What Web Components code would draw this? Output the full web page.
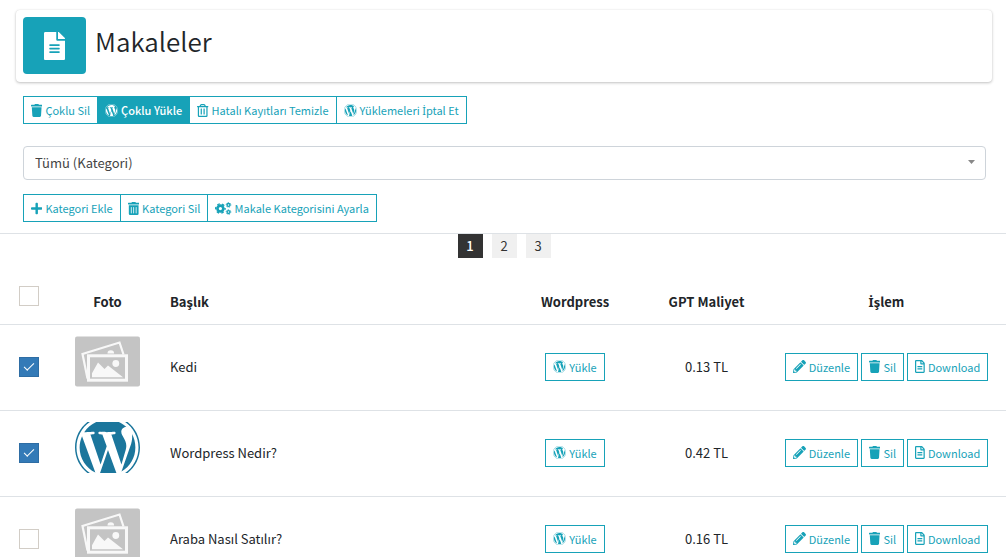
<!DOCTYPE html>
<html lang="tr">
<head>
<meta charset="utf-8">
<meta name="viewport" content="width=device-width, initial-scale=1">
<title>Makaleler</title>
<style>
  :root {
    --info: #17a2b8;
    --line: #dee2e6;
    --text: #212529;
  }

  body {
    margin: 0;
    background: #ffffff;
    color: var(--text);
    font-family: "Noto Sans CJK JP", "Noto Sans", sans-serif;
    font-size: 14px;
    line-height: 20px;
  }
</style>
</head>
<body>
<article-page></article-page>

<script>
const TRASH_LID = "M432 32H312l-9.4-18.7A24 24 0 0 0 281.1 0H166.8a23.72 23.72 0 0 0-21.4 13.3L136 32H16A16 16 0 0 0 0 48v32a16 16 0 0 0 16 16h416a16 16 0 0 0 16-16V48a16 16 0 0 0-16-16z"

const ICONS = {
  trash: { box: "0 0 448 512", body: `<path d="${TRASH_LID}M53.2 467a48 48 0 0 0 47.9 45h245.8a48 48 0 0 0 47.9-45L416 128H32z"/>` },
  bin: { box: "0 0 448 512", body: `<path d="${TRASH_LID}M32 464a48 48 0 0 0 48 48h288a48 48 0 0 0 48-48V128H32zm272-256a16 16 0 0 1 32 0v224a16 16 0 0 1-32 0zm-96 0a16 16 0 0 1 32 0v224a16 16 0 0 1-32 0zm-96 0a16 16 0 0 1 32 0v224a16 16 0 0 1-32 0z"/>` },
  binOutline: { box: "0 0 448 512", body: `<path d="M268 416h24a12 12 0 0 0 12-12V188a12 12 0 0 0-12-12h-24a12 12 0 0 0-12 12v216a12 12 0 0 0 12 12zM432 80h-82.41l-34-56.7A48 48 0 0 0 274.41 0H173.59a48 48 0 0 0-41.16 23.3L98.41 80H16A16 16 0 0 0 0 96v16a16 16 0 0 0 16 16h16v336a48 48 0 0 0 48 48h288a48 48 0 0 0 48-48V128h16a16 16 0 0 0 16-16V96a16 16 0 0 0-16-16zM171.84 50.91A6 6 0 0 1 177 48h94a6 6 0 0 1 5.15 2.91L293.61 80H154.39zM368 464H80V128h288zm-212-48h24a12 12 0 0 0 12-12V188a12 12 0 0 0-12-12h-24a12 12 0 0 0-12 12v216a12 12 0 0 0 12 12z"/>` },
  wordpress: { box: "8 8 496 496", body: `<path d="M61.7 169.4l101.5 278C92.2 413 43.3 340.2 43.3 256c0-30.9 6.6-60.1 18.4-86.6zm337.9 75.9c0-26.3-9.4-44.5-17.5-58.7-10.8-17.5-20.9-32.4-20.9-49.9 0-19.6 14.8-37.8 35.7-37.8.9 0 1.8.1 2.8.2-37.9-34.7-88.3-55.9-143.7-55.9-74.3 0-139.7 38.1-177.8 95.9 5 .2 9.7.3 13.7.3 22.2 0 56.7-2.7 56.7-2.7 11.5-.7 12.8 16.2 1.4 17.5 0 0-11.5 1.3-24.3 2l77.5 230.4L249.8 247l-33.1-90.8c-11.5-.7-22.3-2-22.3-2-11.5-.7-10.1-18.2 1.3-17.5 0 0 35.1 2.7 56 2.7 22.2 0 56.7-2.7 56.7-2.7 11.5-.7 12.8 16.2 1.4 17.5 0 0-11.5 1.3-24.3 2l76.9 228.7 21.2-70.9c9-29.4 16-50.5 16-68.7zm-139.9 29.3l-63.8 185.5c19.1 5.6 39.2 8.7 60.1 8.7 24.8 0 48.5-4.3 70.6-12.1-.6-.9-1.1-1.9-1.5-2.9l-65.4-179.2zm183-120.7c.9 6.8 1.4 14 1.4 21.9 0 21.6-4 45.8-16.2 76.2l-65 187.9C426.2 403 468.7 334.5 468.7 256c0-37-9.4-71.8-26-102.1zM504 256c0 136.8-111.3 248-248 248C119.2 504 8 392.7 8 256 8 119.2 119.2 8 256 8c136.7 0 248 111.2 248 248zm-11.4 0c0-130.5-106.2-236.6-236.6-236.6C125.5 19.4 19.4 125.6 19.4 256S125.6 492.6 256 492.6c130.5 0 236.6-106.1 236.6-236.6z"/>` },
  plus: { box: "0 0 448 512", body: `<path d="M416 208H272V64c0-17.67-14.33-32-32-32h-32c-17.67 0-32 14.33-32 32v144H32c-17.67 0-32 14.33-32 32v32c0 17.67 14.33 32 32 32h144v144c0 17.67 14.33 32 32 32h32c17.67 0 32-14.33 32-32V304h144c17.67 0 32-14.33 32-32v-32c0-17.67-14.33-32-32-32z"/>` },
  cogs: { box: "0 0 640 512", body: `
    <g fill="none" stroke="currentColor">
      <circle cx="212" cy="256" r="116" stroke-width="104"/>
      <circle cx="212" cy="256" r="184" stroke-width="56" stroke-dasharray="100 92.7" stroke-dashoffset="50"/>
      <circle cx="532" cy="116" r="58" stroke-width="54"/>
      <circle cx="532" cy="116" r="92" stroke-width="30" stroke-dasharray="52 44.3" stroke-dashoffset="26"/>
      <circle cx="532" cy="396" r="58" stroke-width="54"/>
      <circle cx="532" cy="396" r="92" stroke-width="30" stroke-dasharray="52 44.3" stroke-dashoffset="26"/>
    </g>` },
  pencil: { box: "0 0 512 512", body: `<path d="M497.9 142.1l-46.1 46.1c-4.7 4.7-12.3 4.7-17 0l-111-111c-4.7-4.7-4.7-12.3 0-17l46.1-46.1c18.7-18.7 49.1-18.7 67.9 0l60.1 60.1c18.8 18.7 18.8 49.1 0 67.9zM284.2 99.8L21.6 362.4.4 483.9c-2.9 16.4 11.4 30.6 27.8 27.8l121.5-21.3 262.6-262.6c4.7-4.7 4.7-12.3 0-17l-111-111c-4.8-4.7-12.4-4.7-17.1 0zM124.1 339.9c-5.5-5.5-5.5-14.3 0-19.8l154-154c5.5-5.5 14.3-5.5 19.8 0s5.5 14.3 0 19.8l-154 154c-5.5 5.5-14.3 5.5-19.8 0zM88 424h48v36.3l-64.5 11.3-31.1-31.1L51.7 376H88v48z"/>` },
  file: { box: "0 0 384 512", body: `<path d="M224 136V0H24C10.7 0 0 10.7 0 24v464c0 13.3 10.7 24 24 24h336c13.3 0 24-10.7 24-24V160H248c-13.2 0-24-10.8-24-24zm64 236c0 6.6-5.4 12-12 12H108c-6.6 0-12-5.4-12-12v-8c0-6.6 5.4-12 12-12h168c6.6 0 12 5.4 12 12v8zm0-64c0 6.6-5.4 12-12 12H108c-6.6 0-12-5.4-12-12v-8c0-6.6 5.4-12 12-12h168c6.6 0 12 5.4 12 12v8zm0-72v8c0 6.6-5.4 12-12 12H108c-6.6 0-12-5.4-12-12v-8c0-6.6 5.4-12 12-12h168c6.6 0 12 5.4 12 12zm96-114.1v6.1H256V0h6.1c6.4 0 12.5 2.5 17 7l97.9 98c4.5 4.5 7 10.6 7 16.9z"/>` },
  fileOutline: { box: "0 0 384 512", body: `<path d="M288 248v28c0 6.6-5.4 12-12 12H108c-6.6 0-12-5.4-12-12v-28c0-6.6 5.4-12 12-12h168c6.6 0 12 5.4 12 12zm-12 72H108c-6.6 0-12 5.4-12 12v28c0 6.6 5.4 12 12 12h168c6.6 0 12-5.4 12-12v-28c0-6.6-5.4-12-12-12zm108-188.1V464c0 26.5-21.5 48-48 48H48c-26.5 0-48-21.5-48-48V48C0 21.5 21.5 0 48 0h204.1C264.8 0 277 5.1 286 14.1L369.9 98c9 8.9 14.1 21.2 14.1 33.9zm-128-80V128h76.1L256 51.9zM336 464V176H232c-13.3 0-24-10.7-24-24V48H48v416h288z"/>` }
}

function iconSvg(name) {
  const icon = ICONS[name]
  return `<svg viewBox="${icon.box}" fill="currentColor" aria-hidden="true">${icon.body}</svg>`
}

const PageHeaderTemplate = document.createElement("template")
PageHeaderTemplate.innerHTML = /* html */ `
  <style>
    :host {
      display: flex;
      align-items: flex-start;
      gap: 9px;
      padding: 7px 7px 8px;
      border-radius: 4px;
      box-shadow: 0 1px 3px rgba(0, 0, 0, 0.24), 0 0 1px rgba(0, 0, 0, 0.12);
    }

    .badge {
      display: flex;
      align-items: center;
      justify-content: center;
      width: 63px;
      height: 57px;
      border-radius: 4px;
      background: var(--info);
      color: #ffffff;
    }

    svg {
      height: 28px;
    }

    h1 {
      margin: 4px 0 0;
      font-size: 26px;
      font-weight: 350;
      line-height: 40px;
    }
  </style>
  <div class="badge">${iconSvg("file")}</div>
  <h1><slot></slot></h1>`

class PageHeader extends HTMLElement {
  constructor() {
    super()
    this.attachShadow({ mode: "open" })
    this.shadowRoot.appendChild(PageHeaderTemplate.content.cloneNode(true))
  }
}

class IconButton extends HTMLElement {
  constructor() {
    super()
    this.attachShadow({ mode: "open" })
  }

  connectedCallback() {
    this.shadowRoot.innerHTML = /* html */ `
      <style>
        :host {
          display: inline-flex;
        }

        button {
          display: flex;
          align-items: center;
          gap: 3px;
          height: 28px;
          padding: 0 7px;
          border: 1px solid var(--info);
          border-radius: 0;
          background: #ffffff;
          color: var(--info);
          font-family: inherit;
          font-size: 11px;
          line-height: 18px;
          white-space: nowrap;
          cursor: pointer;
        }

        :host([active]) button,
        button:hover {
          background: var(--info);
          color: #ffffff;
        }

        :host([active]) button {
          font-weight: 500;
        }

        svg {
          height: 13px;
          flex: none;
        }
      </style>
      <button type="button">${iconSvg(this.getAttribute("icon"))}<span><slot></slot></span></button>`
  }
}

const ButtonGroupTemplate = document.createElement("template")
ButtonGroupTemplate.innerHTML = /* html */ `
  <style>
    :host {
      display: flex;
      flex-wrap: wrap;
    }

    ::slotted(:not(:first-child)) {
      margin-left: -1px;
    }
  </style>
  <slot></slot>`

class ButtonGroup extends HTMLElement {
  constructor() {
    super()
    this.attachShadow({ mode: "open" })
    this.shadowRoot.appendChild(ButtonGroupTemplate.content.cloneNode(true))
  }
}

const CategorySelectTemplate = document.createElement("template")
CategorySelectTemplate.innerHTML = /* html */ `
  <style>
    :host {
      display: grid;
      align-items: center;
    }

    select, svg {
      grid-area: 1 / 1;
    }

    select {
      width: 100%;
      height: 34px;
      padding: 0 11px 2px;
      border: 1px solid #ced4da;
      border-radius: 4px;
      appearance: none;
      background: #ffffff;
      color: #444444;
      font-family: inherit;
      font-size: 13px;
    }

    svg {
      width: 7px;
      height: 4px;
      margin: 0 11px 2px;
      justify-self: end;
      pointer-events: none;
    }
  </style>
  <select aria-label="Kategori">
    <option>Tümü (Kategori)</option>
  </select>
  <svg viewBox="0 0 7 4" fill="#888888" aria-hidden="true"><path d="M0 0h7L3.5 4z"/></svg>`

class CategorySelect extends HTMLElement {
  constructor() {
    super()
    this.attachShadow({ mode: "open" })
    this.shadowRoot.appendChild(CategorySelectTemplate.content.cloneNode(true))
  }
}

const PageListTemplate = document.createElement("template")
PageListTemplate.innerHTML = /* html */ `
  <style>
    :host {
      display: block;
      border-top: 1px solid var(--line);
    }

    nav {
      display: flex;
      justify-content: center;
      gap: 9px;
      padding-left: 2px;
    }

    a {
      width: 25px;
      background: #f0f0f0;
      color: #333333;
      font-size: 13px;
      line-height: 24px;
      text-align: center;
      text-decoration: none;
    }

    a[aria-current] {
      background: #333333;
      color: #ffffff;
      font-weight: 500;
    }
  </style>
  <nav aria-label="Sayfalar">
    <a href="#1" aria-current="page">1</a>
    <a href="#2">2</a>
    <a href="#3">3</a>
  </nav>`

class PageList extends HTMLElement {
  constructor() {
    super()
    this.attachShadow({ mode: "open" })
    this.shadowRoot.appendChild(PageListTemplate.content.cloneNode(true))
  }
}

const PHOTOS = {
  empty: `
    <svg viewBox="0 0 65 50" role="img" aria-label="Foto yok">
      <rect width="65" height="50" rx="2" fill="#c4c4c4"/>
      <path d="M12.5 42L7.5 17.5L44.5 6L48.5 18" fill="none" stroke="#f8f8f8" stroke-width="2.2"/>
      <path d="M32.5 17a3.3 3.3 0 0 1 6.6 0z" fill="#f8f8f8"/>
      <rect x="13.5" y="19.3" width="38" height="24.4" fill="#c4c4c4" stroke="#f8f8f8" stroke-width="3"/>
      <path d="M17 40.7v-4L23 26l6.5 6.5L33 29l15 11.7z" fill="#f8f8f8"/>
      <circle cx="40.8" cy="27" r="3.4" fill="#f8f8f8"/>
    </svg>`,
  wordpress: `
    <svg viewBox="8 8 496 496" preserveAspectRatio="xMidYMid slice" fill="#1b769c" role="img" aria-label="Wordpress">${ICONS.wordpress.body}</svg>`
}

const ARTICLES = [
  { title: "Kedi", photo: "empty", cost: "0.13 TL", checked: true },
  { title: "Wordpress Nedir?", photo: "wordpress", cost: "0.42 TL", checked: true },
  { title: "Araba Nasıl Satılır?", photo: "empty", cost: "0.16 TL", checked: false }
]

class ArticleTable extends HTMLElement {
  constructor() {
    super()
    this.attachShadow({ mode: "open" })
    this.shadowRoot.innerHTML = /* html */ `
      <style>
        :host {
          display: block;
        }

        table {
          width: 100%;
          border-collapse: separate;
          border-spacing: 0;
          table-layout: fixed;
        }

        th, td {
          box-sizing: border-box;
          padding: 0 0 2px;
          border-bottom: 1px solid var(--line);
          text-align: center;
          vertical-align: middle;
          font-size: 13px;
        }

        th {
          height: 47px;
          padding: 2px 0 0;
          font-weight: 700;
        }

        td {
          height: 86px;
        }

        .check {
          width: 57px;
        }

        th.check {
          padding-top: 8px;
          vertical-align: top;
        }

        .photo {
          width: 101px;
        }

        .title {
          padding-left: 12px;
          text-align: left;
        }

        .upload {
          width: 142px;
        }

        .cost {
          width: 121px;
        }

        .actions {
          width: 239px;
        }

        /* the dotted capital is missing from the CJK family */
        .dotted {
          font-family: "Noto Sans", sans-serif;
          line-height: 1;
        }

        .photo svg {
          display: block;
          width: 65px;
          height: 51px;
          margin: 0 auto 10px;
        }

        .buttons {
          display: flex;
          justify-content: center;
          gap: 3px;
        }

        input {
          display: block;
          box-sizing: border-box;
          width: 20px;
          height: 20px;
          margin: 0 0 0 19px;
          border: 1px solid #d2cdc6;
          appearance: none;
          background: #ffffff;
        }

        input:checked {
          border-color: #2e6da4;
          background: #337ab7;
        }

        input:checked::before {
          content: "";
          display: block;
          width: 9px;
          height: 4px;
          margin: 5px 0 0 4px;
          border-left: 1px solid #ffffff;
          border-bottom: 1px solid #ffffff;
          transform: rotate(-45deg);
        }
      </style>
      <table>
        <thead>
          <tr>
            <th class="check"><input type="checkbox" aria-label="Tümünü seç"></th>
            <th class="photo">Foto</th>
            <th class="title">Başlık</th>
            <th class="upload">Wordpress</th>
            <th class="cost">GPT Maliyet</th>
            <th class="actions"><span class="dotted">İ</span>şlem</th>
          </tr>
        </thead>
        <tbody>${ARTICLES.map(this.renderRow).join("")}</tbody>
      </table>`
  }

  renderRow(article) {
    return /* html */ `
      <tr>
        <td class="check"><input type="checkbox" aria-label="${article.title}"${article.checked ? " checked" : ""}></td>
        <td class="photo">${PHOTOS[article.photo]}</td>
        <td class="title">${article.title}</td>
        <td class="upload"><div class="buttons"><icon-button icon="wordpress">Yükle</icon-button></div></td>
        <td class="cost">${article.cost}</td>
        <td class="actions">
          <div class="buttons">
            <icon-button icon="pencil">Düzenle</icon-button>
            <icon-button icon="trash">Sil</icon-button>
            <icon-button icon="fileOutline">Download</icon-button>
          </div>
        </td>
      </tr>`
  }
}

const ArticlePageTemplate = document.createElement("template")
ArticlePageTemplate.innerHTML = /* html */ `
  <style>
    :host {
      display: block;
      padding-top: 10px;
    }

    page-header {
      margin: 0 14px 0 16px;
    }

    .tools {
      display: grid;
      padding: 14px 20px 11px 23px;
    }

    .dotted {
      font-family: "Noto Sans", sans-serif;
      line-height: 1;
    }

    category-select {
      margin: 22px 0 14px;
    }

    article-table {
      margin-top: 20px;
    }
  </style>
  <page-header>Makaleler</page-header>
  <div class="tools">
    <button-group>
      <icon-button icon="trash">Çoklu Sil</icon-button>
      <icon-button icon="wordpress" active>Çoklu Yükle</icon-button>
      <icon-button icon="binOutline">Hatalı Kayıtları Temizle</icon-button>
      <icon-button icon="wordpress">Yüklemeleri <span class="dotted">İ</span>ptal Et</icon-button>
    </button-group>
    <category-select></category-select>
    <button-group>
      <icon-button icon="plus">Kategori Ekle</icon-button>
      <icon-button icon="bin">Kategori Sil</icon-button>
      <icon-button icon="cogs">Makale Kategorisini Ayarla</icon-button>
    </button-group>
  </div>
  <page-list></page-list>
  <article-table></article-table>`

class ArticlePage extends HTMLElement {
  constructor() {
    super()
    this.attachShadow({ mode: "open" })
    this.shadowRoot.appendChild(ArticlePageTemplate.content.cloneNode(true))
  }
}

customElements.define("page-header", PageHeader)
customElements.define("icon-button", IconButton)
customElements.define("button-group", ButtonGroup)
customElements.define("category-select", CategorySelect)
customElements.define("page-list", PageList)
customElements.define("article-table", ArticleTable)
customElements.define("article-page", ArticlePage)
</script>
</body>
</html>
